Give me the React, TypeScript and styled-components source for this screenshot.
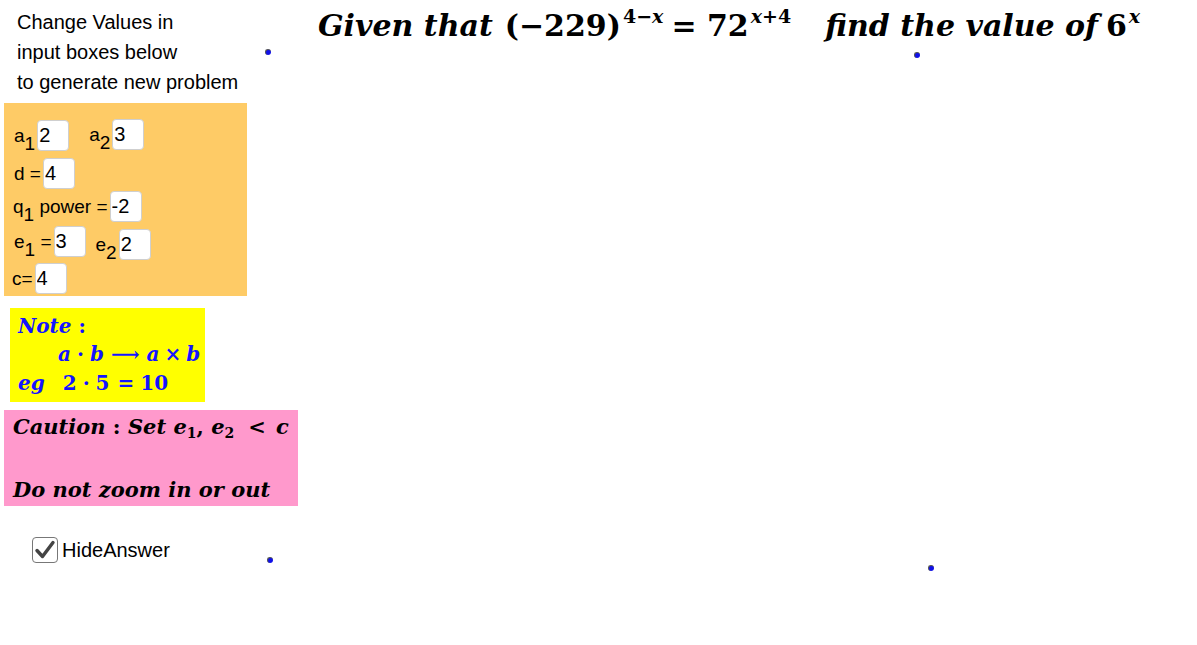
import React from "react";
import styled, { createGlobalStyle } from "styled-components";

const GlobalStyle = createGlobalStyle`
  html, body {
    margin: 0;
    padding: 0;
    background: #fff;
    overflow: hidden;
  }
`;

const Canvas = styled.div`
  position: relative;
  width: 1197px;
  height: 645px;
  display: flex;
  align-items: flex-start;
  background: #fff;
  font-family: "Liberation Sans", Arial, sans-serif;
  color: #000;
`;

const LeftColumn = styled.div`
  width: 300px;
  flex-shrink: 0;
  display: flex;
  flex-direction: column;
  align-items: flex-start;
`;

const Intro = styled.div`
  margin: 7px 0 0 17px;
  font-size: 20px;
  line-height: 30px;
  white-space: nowrap;
`;

const OrangeBox = styled.div`
  margin: 6px 0 0 4px;
  width: 243px;
  height: 193px;
  box-sizing: border-box;
  padding: 17px 0 0 10px;
  background: #fecb66;
  display: flex;
  flex-direction: column;
`;

const Row = styled.div<{ $top: number; $gap: number }>`
  display: flex;
  align-items: flex-start;
  margin-top: ${(p) => p.$top}px;
  gap: ${(p) => p.$gap}px;
  height: 31px;
`;

const Field = styled.div<{ $shift?: number; $indent?: number }>`
  display: flex;
  align-items: baseline;
  gap: 2px;
  margin-top: ${(p) => p.$shift || 0}px;
  margin-left: ${(p) => p.$indent || 0}px;
  font-size: 19px;
`;

const Label = styled.span`
  white-space: pre;
`;

const Sub = styled.span`
  font-size: 19px;
  line-height: 0;
  vertical-align: -8px;
`;

const ValueInput = styled.input`
  width: 32px;
  height: 31px;
  box-sizing: border-box;
  border: 1px solid #cfcfcf;
  border-radius: 4px;
  background: #fff;
  padding: 0 1px;
  margin: 0;
  font-family: "Liberation Sans", Arial, sans-serif;
  font-size: 20px;
  color: #000;
  outline: none;
`;

const MathBox = styled.div<{ $bg: string; $color: string; $left: number; $top: number; $w: number; $h: number; $size: number }>`
  margin: ${(p) => p.$top}px 0 0 ${(p) => p.$left}px;
  width: ${(p) => p.$w}px;
  height: ${(p) => p.$h}px;
  box-sizing: border-box;
  background: ${(p) => p.$bg};
  color: ${(p) => p.$color};
  font-family: "DejaVu Serif", "Liberation Serif", serif;
  font-weight: bold;
  font-size: ${(p) => p.$size}px;
`;

const MathLine = styled.div<{ $indent?: number; $height: number; $padTop?: number }>`
  height: ${(p) => p.$height}px;
  line-height: ${(p) => p.$height}px;
  padding-left: ${(p) => p.$indent || 0}px;
  padding-top: ${(p) => p.$padTop || 0}px;
  white-space: pre;
`;

const I = styled.i<{ $gap?: number }>`
  font-style: italic;
  margin-left: ${(p) => p.$gap || 0}px;
`;

const Up = styled.span<{ $gap?: number }>`
  font-style: normal;
  margin-left: ${(p) => p.$gap || 0}px;
`;

const MSub = styled.span`
  font-style: normal;
  font-size: 14px;
  vertical-align: -4px;
  line-height: 0;
`;

const CheckRow = styled.label`
  margin: 31px 0 0 32px;
  display: flex;
  align-items: center;
  gap: 4px;
  font-size: 20px;
`;

const CheckBox = styled.span`
  width: 26px;
  height: 26px;
  box-sizing: border-box;
  border: 1.5px solid #777;
  border-radius: 4px;
  display: flex;
  align-items: center;
  justify-content: center;
  background: #fff;
`;

const Title = styled.div`
  margin: 4px 0 0 18px;
  font-family: "DejaVu Serif", "Liberation Serif", serif;
  font-weight: bold;
  font-size: 30px;
  line-height: 44px;
  white-space: pre;
`;

const TitleItalic = styled.span<{ $gap?: number }>`
  font-style: italic;
  margin-left: ${(p) => p.$gap || 0}px;
`;

const TitleUp = styled.span<{ $gap?: number }>`
  font-style: normal;
  margin-left: ${(p) => p.$gap || 0}px;
`;

const Sup = styled.span`
  font-size: 19px;
  vertical-align: 13px;
  line-height: 0;
  margin-left: 2px;
`;

const SupItalic = styled.i`
  font-style: italic;
`;

const Point = styled.span<{ $x: number; $y: number }>`
  position: absolute;
  left: ${(p) => p.$x}px;
  top: ${(p) => p.$y}px;
  width: 6px;
  height: 6px;
  border-radius: 50%;
  background: #1010e8;
  border-top: 1px solid #555;
  border-left: 1px solid #555;
  box-sizing: border-box;
`;

const points = [
  { x: 265, y: 49 },
  { x: 914, y: 52 },
  { x: 267, y: 557 },
  { x: 928, y: 565 },
];

export default function App() {
  return (
    <>
      <GlobalStyle />
      <Canvas>
        <LeftColumn>
          <Intro>
            Change Values in
            <br />
            input boxes below
            <br />
            to generate new problem
          </Intro>

          <OrangeBox>
            <Row $top={0} $gap={20}>
              <Field>
                <Label>
                  a<Sub>1</Sub>
                </Label>
                <ValueInput defaultValue="2" />
              </Field>
              <Field $shift={-1}>
                <Label>
                  a<Sub>2</Sub>
                </Label>
                <ValueInput defaultValue="3" />
              </Field>
            </Row>
            <Row $top={7} $gap={0}>
              <Field>
                <Label>d =</Label>
                <ValueInput defaultValue="4" />
              </Field>
            </Row>
            <Row $top={2} $gap={0}>
              <Field $indent={-1}>
                <Label>
                  q<Sub>1</Sub> power =
                </Label>
                <ValueInput defaultValue="-2" />
              </Field>
            </Row>
            <Row $top={4} $gap={10}>
              <Field>
                <Label>
                  e<Sub>1</Sub> =
                </Label>
                <ValueInput defaultValue="3" />
              </Field>
              <Field $shift={3}>
                <Label>
                  e<Sub>2</Sub>
                </Label>
                <ValueInput defaultValue="2" />
              </Field>
            </Row>
            <Row $top={6} $gap={0}>
              <Field $indent={-2}>
                <Label>c=</Label>
                <ValueInput defaultValue="4" />
              </Field>
            </Row>
          </OrangeBox>

          <MathBox $bg="#ffff00" $color="#1414ff" $left={10} $top={12} $w={195} $h={94} $size={20}>
            <MathLine $indent={8} $height={36}>
              <I>Note</I> <Up>:</Up>
            </MathLine>
            <MathLine $indent={48} $height={20}>
              <I>a</I>
              <Up $gap={6}>·</Up>
              <I $gap={6}>b</I>
              <Up $gap={7}>⟶</Up>
              <I $gap={7}>a</I>
              <Up $gap={5}>×</Up>
              <I $gap={5}>b</I>
            </MathLine>
            <MathLine $indent={8} $height={38}>
              <I>eg</I>
              <Up $gap={18}>2</Up>
              <Up $gap={6}>·</Up>
              <Up $gap={6}>5</Up>
              <Up $gap={8}>=</Up>
              <Up $gap={6}>10</Up>
            </MathLine>
          </MathBox>

          <MathBox $bg="#ff99cc" $color="#000" $left={4} $top={8} $w={294} $h={96} $size={21}>
            <MathLine $indent={9} $height={34}>
              <I>Caution</I> <Up>:</Up> <I>Set e</I>
              <MSub>1</MSub>
              <Up>, </Up>
              <I>e</I>
              <MSub>2</MSub>
              <Up $gap={14}>&lt;</Up>
              <I $gap={10}>c</I>
            </MathLine>
            <MathLine $indent={9} $height={58} $padTop={17}>
              <I>Do not zoom in or out</I>
            </MathLine>
          </MathBox>

          <CheckRow>
            <CheckBox>
              <svg width="22" height="22" viewBox="0 0 22 22">
                <path
                  d="M3 11.5 L8.5 17.5 L19 3.5"
                  fill="none"
                  stroke="#444"
                  strokeWidth="3.4"
                  strokeLinecap="round"
                  strokeLinejoin="round"
                />
              </svg>
            </CheckBox>
            HideAnswer
          </CheckRow>
        </LeftColumn>

        <Title>
          <TitleItalic>Given that</TitleItalic>
          <TitleUp $gap={12}>(−229)</TitleUp>
          <Sup>
            4−<SupItalic>x</SupItalic>
          </Sup>
          <TitleUp $gap={8}>= 72</TitleUp>
          <Sup>
            <SupItalic>x</SupItalic>+4
          </Sup>
          <TitleItalic $gap={34}>find the value of</TitleItalic>
          <TitleUp $gap={8}>6</TitleUp>
          <Sup>
            <SupItalic>x</SupItalic>
          </Sup>
        </Title>

        {points.map((p, i) => (
          <Point key={i} $x={p.x} $y={p.y} />
        ))}
      </Canvas>
    </>
  );
}
